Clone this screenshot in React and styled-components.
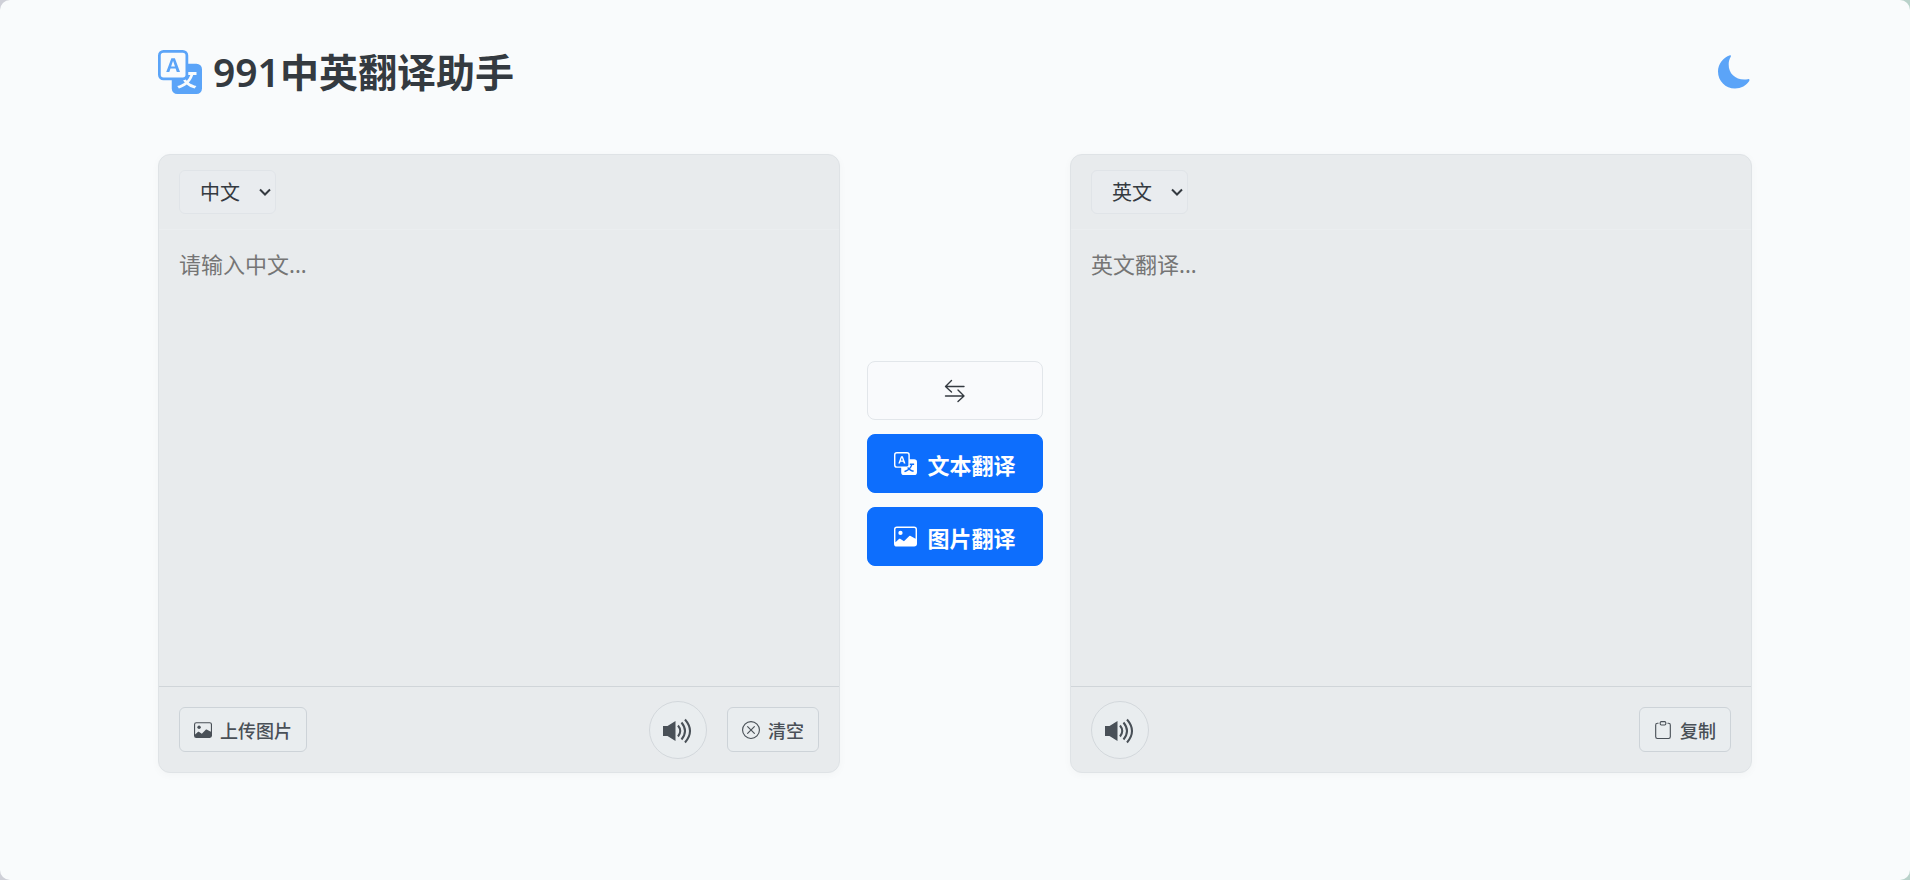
import React, { useState } from "react";
import styled, { createGlobalStyle } from "styled-components";
import { BsTranslate, BsImage, BsXCircle, BsClipboard } from "react-icons/bs";

const GlobalStyle = createGlobalStyle`
  *, *::before, *::after { box-sizing: border-box; }
  body {
    margin: 0;
    background: linear-gradient(90deg, #cfd0d8, #b9d2ca);
    color: #343a40;
    font-family: "Noto Sans", "Noto Sans CJK SC", sans-serif;
  }
  button, select, textarea { font-family: inherit; color: inherit; }
  button { cursor: pointer; }
`;

const Page = styled.div`
  min-height: 100vh;
  padding: 40px 24px;
  border-radius: 10px;
  background: #f9fbfc;
`;

const Container = styled.div`
  width: 100%;
  max-width: 1594px;
  margin: 0 auto;
`;

const Header = styled.header`
  display: flex;
  align-items: center;
  justify-content: space-between;
  height: 64px;
  margin-bottom: 50px;
`;

const Title = styled.h1`
  display: flex;
  align-items: center;
  gap: 11px;
  margin: 0;
  font-size: 39px;
  font-weight: 600;
  line-height: 64px;

  svg { color: #5ba4f8; }
`;

const ThemeButton = styled.button`
  display: flex;
  padding: 0;
  border: 0;
  background: none;
  color: #5ba4f8;
`;

const Workspace = styled.main`
  display: grid;
  grid-template-columns: 1fr 176px 1fr;
  align-items: center;
  gap: 27px;
`;

const Panel = styled.section`
  display: flex;
  flex-direction: column;
  border: 1px solid #dfe3e6;
  border-radius: 12px;
  background: #e8ebed;
  box-shadow: 0 2px 8px rgba(0, 0, 0, 0.03);
  overflow: hidden;
`;

const PanelHeader = styled.div`
  padding: 15px 20px;
  border-bottom: 1px solid #ebeef0;
`;

const LanguagePicker = styled.label`
  position: relative;
  display: inline-flex;
  vertical-align: top;

  svg {
    position: absolute;
    right: 4px;
    top: 15px;
    pointer-events: none;
  }
`;

const LanguageSelect = styled.select`
  width: 97px;
  height: 44px;
  padding: 0 20px;
  appearance: none;
  border: 1px solid #e0e4e8;
  border-radius: 6px;
  background: #e9ecef;
  font-size: 20px;
`;

const TextArea = styled.textarea`
  display: block;
  width: 100%;
  height: 456px;
  padding: 18px 20px;
  border: 0;
  outline: 0;
  resize: none;
  background: transparent;
  font-size: 22px;
  line-height: 32px;

  &::placeholder { color: #757575; opacity: 1; }
`;

const PanelFooter = styled.div`
  display: flex;
  align-items: center;
  justify-content: space-between;
  height: 86px;
  padding: 0 20px;
  border-top: 1px solid #d0d5d9;
`;

const FooterGroup = styled.div`
  display: flex;
  align-items: center;
  gap: 20px;
`;

const ToolButton = styled.button`
  display: flex;
  align-items: center;
  gap: 8px;
  height: 45px;
  padding: 0 14px;
  border: 1px solid #cdd3d8;
  border-radius: 6px;
  background: #e9edef;
  color: #495057;
  font-size: 18px;
  font-weight: 500;
`;

const SpeakButton = styled.button`
  display: flex;
  align-items: center;
  justify-content: center;
  width: 58px;
  height: 58px;
  padding: 0;
  border: 1px solid #d3d8dc;
  border-radius: 50%;
  background: #e9edef;
  color: #495057;
`;

const Actions = styled.div`
  display: flex;
  flex-direction: column;
  gap: 14px;
`;

const ActionButton = styled.button`
  display: flex;
  align-items: center;
  justify-content: center;
  gap: 10px;
  height: 59px;
  padding: 0;
  border: 1px solid ${(p) => (p.$primary ? "#0d6efd" : "#e2e6ea")};
  border-radius: 8px;
  background: ${(p) => (p.$primary ? "#0d6efd" : "#f9fafc")};
  color: ${(p) => (p.$primary ? "#fff" : "#343a40")};
  font-size: 22px;
  font-weight: 600;
`;

const MoonIcon = () => (
  <svg width="34" height="34" viewBox="0 0 34 34" aria-hidden="true">
    <path
      fill="currentColor"
      d="M12 .2C5 2.500 0 9 0 16.500 0 26 7.500 33.500 17 33.500c6 0 11.500-3 14.200-7.500.7-1.300.1-2.200-1.400-1.800C19 26 10.500 19.500 10.700 9.500c0-3 .6-5.300 1.900-7.500C13.400.8 13 0 12 .2z"
    />
  </svg>
);

const ChevronIcon = () => (
  <svg width="14" height="14" viewBox="0 0 14 14" fill="none" stroke="currentColor" strokeWidth="2" aria-hidden="true">
    <path d="M2 4.500 7 9.500 12 4.500" />
  </svg>
);

const SwapIcon = () => (
  <svg width="22" height="24" viewBox="0 0 22 24" fill="none" stroke="currentColor" strokeWidth="1.4" strokeLinecap="round" strokeLinejoin="round" aria-hidden="true">
    <path d="M20 7.500H1.500M7.500 1.500 1.500 7.500 7.500 13M1.500 17H20M14 11 20 17 14 22.500" />
  </svg>
);

const SpeakerIcon = () => (
  <svg width="30" height="28" viewBox="0 0 30 28" aria-hidden="true">
    <path fill="currentColor" d="M0 10h4.500L12.500 5v20L4.500 20H0z" />
    <path fill="none" stroke="currentColor" strokeWidth="2" d="M15 9.500q4.500 5.500 0 11M18.500 6.500q7 8.500 0 17M22 3.500q10 11.500 0 23" />
  </svg>
);

function LanguageField({ label, value, onChange }) {
  return (
    <LanguagePicker>
      <LanguageSelect aria-label={label} value={value} onChange={onChange}>
        <option value="zh">中文</option>
        <option value="en">英文</option>
      </LanguageSelect>
      <ChevronIcon />
    </LanguagePicker>
  );
}

export default function App() {
  const [from, setFrom] = useState("zh");
  const [text, setText] = useState("");
  const to = from === "zh" ? "en" : "zh";
  const swap = () => setFrom(to);
  const names = { zh: "中文", en: "英文" };

  return (
    <>
      <GlobalStyle />
      <Page>
        <Container>
          <Header>
            <Title>
              <BsTranslate size={44} />
              991中英翻译助手
            </Title>
            <ThemeButton type="button" aria-label="切换主题">
              <MoonIcon />
            </ThemeButton>
          </Header>
          <Workspace>
            <Panel>
              <PanelHeader>
                <LanguageField label="源语言" value={from} onChange={swap} />
              </PanelHeader>
              <TextArea
                aria-label="原文"
                placeholder={`请输入${names[from]}...`}
                value={text}
                onChange={(e) => setText(e.target.value)}
              />
              <PanelFooter>
                <ToolButton type="button">
                  <BsImage size={18} />
                  上传图片
                </ToolButton>
                <FooterGroup>
                  <SpeakButton type="button" aria-label="朗读原文">
                    <SpeakerIcon />
                  </SpeakButton>
                  <ToolButton type="button" onClick={() => setText("")}>
                    <BsXCircle size={18} />
                    清空
                  </ToolButton>
                </FooterGroup>
              </PanelFooter>
            </Panel>
            <Actions>
              <ActionButton type="button" aria-label="交换语言" onClick={swap}>
                <SwapIcon />
              </ActionButton>
              <ActionButton type="button" $primary>
                <BsTranslate size={23} />
                文本翻译
              </ActionButton>
              <ActionButton type="button" $primary>
                <BsImage size={23} />
                图片翻译
              </ActionButton>
            </Actions>
            <Panel>
              <PanelHeader>
                <LanguageField label="目标语言" value={to} onChange={swap} />
              </PanelHeader>
              <TextArea aria-label="译文" placeholder={`${names[to]}翻译...`} readOnly />
              <PanelFooter>
                <SpeakButton type="button" aria-label="朗读译文">
                  <SpeakerIcon />
                </SpeakButton>
                <ToolButton type="button">
                  <BsClipboard size={18} />
                  复制
                </ToolButton>
              </PanelFooter>
            </Panel>
          </Workspace>
        </Container>
      </Page>
    </>
  );
}
